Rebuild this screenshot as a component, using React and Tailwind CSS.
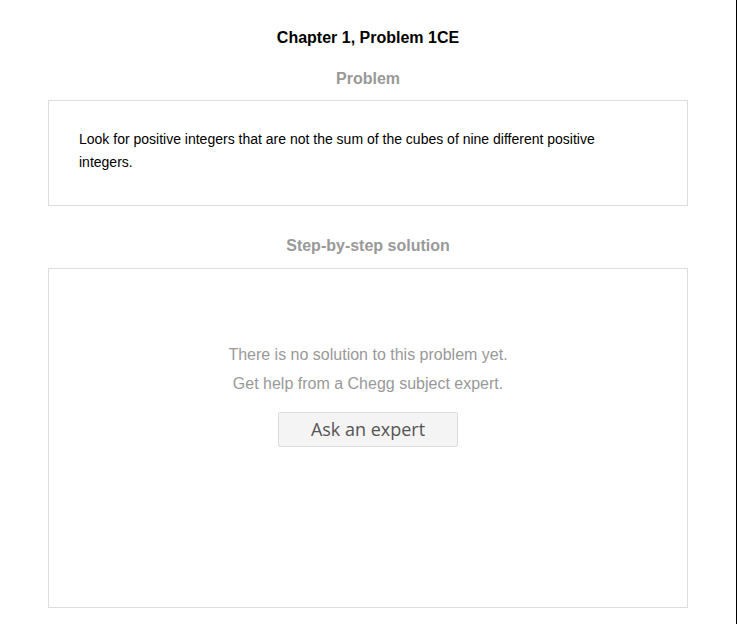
export default function App() {
  return (
    <div className="flex min-h-[624px] bg-white">
      <div className="w-[736px] px-12 pt-[26px] font-['Liberation_Sans',Arial,sans-serif]">
        <h1 className="text-center text-base leading-6 font-bold text-black">Chapter 1, Problem 1CE</h1>

        <h2 className="mt-[17px] mb-[9px] text-center text-base leading-6 font-bold text-[#999]">Problem</h2>
        <div className="border border-[#ddd] pt-[27px] pb-[31px] pl-[30px] pr-[40px]">
          <p className="text-sm leading-[23px] text-black">
            Look for positive integers that are not the sum of the cubes of nine different positive integers.
          </p>
        </div>

        <h2 className="mt-[28px] mb-[10px] text-center text-base leading-6 font-bold text-[#999]">Step-by-step solution</h2>
        <div className="h-[340px] border border-[#ddd] pt-[74px] flex flex-col items-center">
          <p className="text-base leading-6 text-[#999]">There is no solution to this problem yet.</p>
          <p className="mt-[5px] text-base leading-6 text-[#999]">Get help from a Chegg subject expert.</p>
          <button className="mt-4 h-[35px] w-[180px] rounded-[2px] border border-[#ddd] bg-[#f4f4f4] font-['Open_Sans',sans-serif] text-[18px] text-[#555]">
            Ask an expert
          </button>
        </div>
      </div>
      <div className="w-px bg-black" />
      <div className="w-px bg-white" />
    </div>
  );
}
